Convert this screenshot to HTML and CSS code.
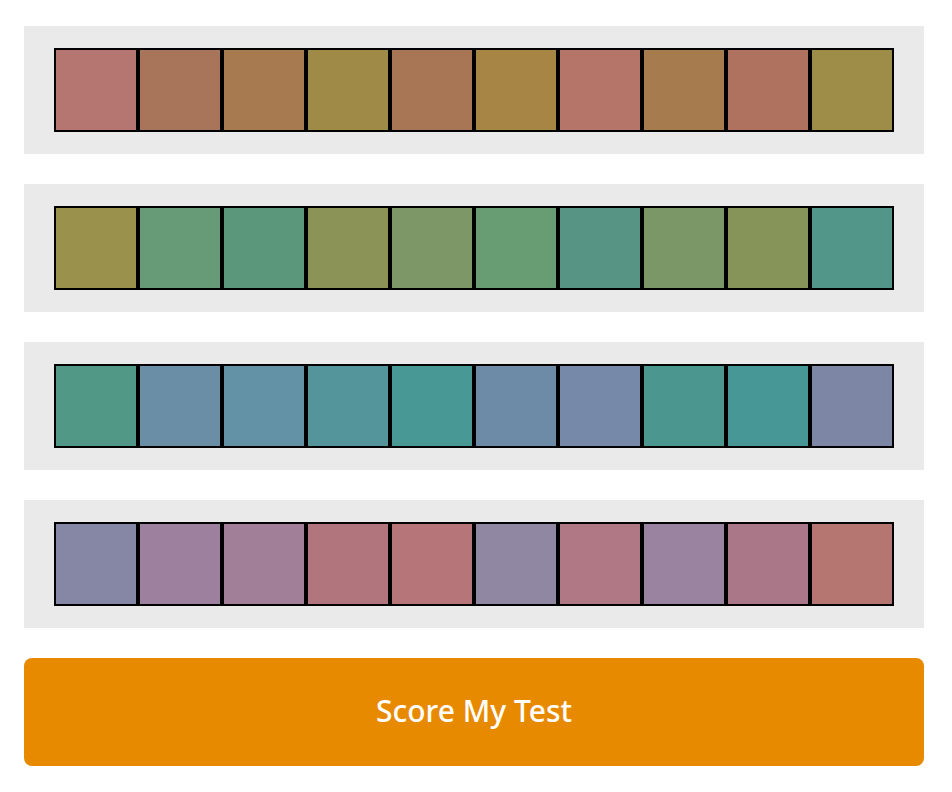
FILE: index.html
```html
<!DOCTYPE html>
<html lang="en">
<head>
<meta charset="utf-8">
<title>Hue Test</title>
<link rel="stylesheet" href="styles.css">
</head>
<body>
<main class="test">
  <section class="row">
    <div class="swatch" style="background:#B57570"></div>
    <div class="swatch" style="background:#A8755A"></div>
    <div class="swatch" style="background:#A87A50"></div>
    <div class="swatch" style="background:#A08A48"></div>
    <div class="swatch" style="background:#A87555"></div>
    <div class="swatch" style="background:#A68545"></div>
    <div class="swatch" style="background:#B57669"></div>
    <div class="swatch" style="background:#A67C4E"></div>
    <div class="swatch" style="background:#AF725F"></div>
    <div class="swatch" style="background:#9E8D48"></div>
  </section>
  <section class="row">
    <div class="swatch" style="background:#9A914C"></div>
    <div class="swatch" style="background:#679B78"></div>
    <div class="swatch" style="background:#5A977B"></div>
    <div class="swatch" style="background:#8C9356"></div>
    <div class="swatch" style="background:#7E9766"></div>
    <div class="swatch" style="background:#689C72"></div>
    <div class="swatch" style="background:#579483"></div>
    <div class="swatch" style="background:#7B9667"></div>
    <div class="swatch" style="background:#879459"></div>
    <div class="swatch" style="background:#52968A"></div>
  </section>
  <section class="row">
    <div class="swatch" style="background:#519887"></div>
    <div class="swatch" style="background:#6A8EA6"></div>
    <div class="swatch" style="background:#6391A5"></div>
    <div class="swatch" style="background:#54959C"></div>
    <div class="swatch" style="background:#489896"></div>
    <div class="swatch" style="background:#6D8BA6"></div>
    <div class="swatch" style="background:#7789A8"></div>
    <div class="swatch" style="background:#4B978F"></div>
    <div class="swatch" style="background:#489797"></div>
    <div class="swatch" style="background:#7D86A4"></div>
  </section>
  <section class="row">
    <div class="swatch" style="background:#8587A4"></div>
    <div class="swatch" style="background:#9C809D"></div>
    <div class="swatch" style="background:#A17F99"></div>
    <div class="swatch" style="background:#B1757E"></div>
    <div class="swatch" style="background:#B67578"></div>
    <div class="swatch" style="background:#9087A3"></div>
    <div class="swatch" style="background:#B07784"></div>
    <div class="swatch" style="background:#9A83A0"></div>
    <div class="swatch" style="background:#AA7788"></div>
    <div class="swatch" style="background:#B57570"></div>
  </section>
  <button class="score" type="button">Score My Test</button>
</main>
</body>
</html>
```

FILE: styles.css
```css
* {
  box-sizing: border-box;
}

body {
  margin: 0;
  background: #ffffff;
  font-family: "Noto Sans", "Open Sans", "Liberation Sans", sans-serif;
}

.test {
  width: 900px;
  margin: 26px 0 0 24px;
  display: flex;
  flex-direction: column;
  gap: 30px;
}

.row {
  background: #eaeaea;
  padding: 22px 30px;
  display: flex;
}

.swatch {
  width: 84px;
  height: 84px;
  border: 2px solid #000000;
}

.score {
  height: 108px;
  padding: 0 0 4px;
  border: none;
  border-radius: 8px;
  background: #e88a00;
  color: #ffffff;
  font-family: inherit;
  font-size: 30px;
  font-weight: 500;
  cursor: pointer;
}
```
